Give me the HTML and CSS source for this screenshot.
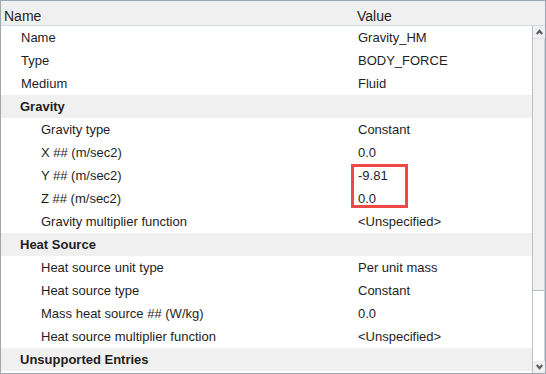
FILE: index.html
```html
<!DOCTYPE html>
<html lang="en">
<head>
    <meta charset="UTF-8">
    <title>Properties</title>
    <link rel="stylesheet" href="styles.css">
</head>
<body>
    <div class="grid">
        <div class="head">
            <span class="head-name">Name</span>
            <span class="head-value">Value</span>
        </div>
        <div class="body">
            <div class="rows">
                <div class="row"><span class="name lvl1">Name</span><span class="value">Gravity_HM</span></div>
                <div class="row"><span class="name lvl1">Type</span><span class="value">BODY_FORCE</span></div>
                <div class="row"><span class="name lvl1">Medium</span><span class="value">Fluid</span></div>
                <div class="row group"><span class="name">Gravity</span><span class="value"></span></div>
                <div class="row"><span class="name lvl2">Gravity type</span><span class="value">Constant</span></div>
                <div class="row"><span class="name lvl2">X ## (m/sec2)</span><span class="value">0.0</span></div>
                <div class="row"><span class="name lvl2">Y ## (m/sec2)</span><span class="value">-9.81</span></div>
                <div class="row"><span class="name lvl2">Z ## (m/sec2)</span><span class="value">0.0</span></div>
                <div class="row"><span class="name lvl2">Gravity multiplier function</span><span class="value">&lt;Unspecified&gt;</span></div>
                <div class="row group"><span class="name">Heat Source</span><span class="value"></span></div>
                <div class="row"><span class="name lvl2">Heat source unit type</span><span class="value">Per unit mass</span></div>
                <div class="row"><span class="name lvl2">Heat source type</span><span class="value">Constant</span></div>
                <div class="row"><span class="name lvl2">Mass heat source ## (W/kg)</span><span class="value">0.0</span></div>
                <div class="row"><span class="name lvl2">Heat source multiplier function</span><span class="value">&lt;Unspecified&gt;</span></div>
                <div class="row group"><span class="name">Unsupported Entries</span><span class="value"></span></div>
            </div>
            <div class="scrollbar">
                <div class="sb-btn">
                    <svg width="7" height="6" viewBox="0 0 7 6"><polyline points="0.8,5 3.5,1.8 6.2,5" fill="none" stroke="#5a5a5a" stroke-width="2"/></svg>
                </div>
                <div class="sb-thumb"></div>
                <div class="sb-track"></div>
                <div class="sb-btn">
                    <svg width="7" height="6" viewBox="0 0 7 6"><polyline points="0.8,1 3.5,4.2 6.2,1" fill="none" stroke="#5a5a5a" stroke-width="2"/></svg>
                </div>
            </div>
        </div>
        <div class="highlight"></div>
    </div>
</body>
</html>
```

FILE: styles.css
```css
body {
    margin: 0;
    font-family: "Liberation Sans", Arial, sans-serif;
    color: #1e1e1e;
}
.grid {
    position: relative;
    box-sizing: border-box;
    width: 546px;
    height: 374px;
    border: 1px solid #9ea8b4;
    display: flex;
    flex-direction: column;
    background: #fff;
}
.head {
    display: grid;
    grid-template-columns: 356px 1fr;
    height: 24px;
    padding-top: 0;
    background: #f0f0f0;
    border-bottom: 1px solid #d6dce3;
    font-size: 14px;
    line-height: 18px;
}
.head span {
    padding-top: 6px;
}
.head-name {
    padding-left: 3px;
}
.body {
    flex: 1;
    display: flex;
    min-height: 0;
}
.rows {
    flex: 1;
    font-size: 13px;
}
.row {
    display: grid;
    grid-template-columns: 356px 1fr;
    height: 23px;
    line-height: 23px;
    white-space: nowrap;
}
.row .name {
    padding-left: 19px;
}
.row .name.lvl1 {
    padding-left: 20px;
}
.row .name.lvl2 {
    padding-left: 40px;
}
.row .value {
    padding-left: 1px;
}
.group {
    background: #f0f0f0;
    font-weight: bold;
}
.scrollbar {
    width: 12px;
    display: flex;
    flex-direction: column;
    border-left: 1px solid #b7c0cb;
    background: #fff;
}
.sb-btn {
    height: 12px;
    display: flex;
    align-items: center;
    justify-content: center;
    background: #f0f0f0;
}
.sb-thumb {
    height: 251px;
    background: #f0f0f0;
    border-top: 1px solid #dde2e8;
    border-bottom: 1px solid #b7c0cb;
    border-right: 1px solid #c8cfd7;
}
.sb-track {
    flex: 1;
    border-right: 1px solid #c8cfd7;
}
.highlight {
    position: absolute;
    left: 350px;
    top: 163px;
    width: 57px;
    height: 44px;
    box-sizing: border-box;
    border: 3px solid #f04848;
}
```
